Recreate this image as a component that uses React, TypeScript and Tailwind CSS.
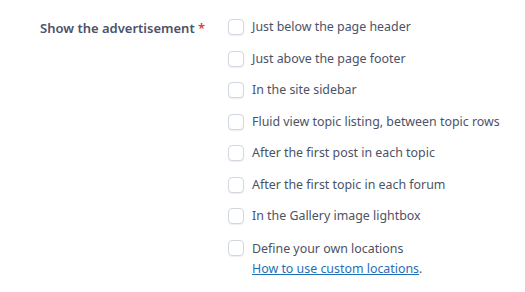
import React from "react";

const options = [
  "Just below the page header",
  "Just above the page footer",
  "In the site sidebar",
  "Fluid view topic listing, between topic rows",
  "After the first post in each topic",
  "After the first topic in each forum",
  "In the Gallery image lightbox",
];

function Box() {
  return (
    <span className="mt-[2px] h-4 w-4 shrink-0 rounded-[4px] border border-[#d3d7e2] bg-white shadow-[0_1px_1px_rgba(40,50,80,0.08)]" />
  );
}

export default function App() {
  return (
    <div
      className="h-[292px] w-[525px] bg-white text-[13px] leading-5 text-[#4c5266]"
      style={{ fontFamily: '"Noto Sans", "Open Sans", sans-serif' }}
    >
      <div className="flex pl-10 pt-[17px]">
        <div className="w-[188px] shrink-0 pt-[1px] font-semibold text-[#4a526c]">
          Show the advertisement <span className="text-[#d93a3a]">*</span>
        </div>
        <div className="flex flex-col gap-[11.5px] text-[12.4px]">
          {options.map((o) => (
            <label key={o} className="flex items-start gap-2">
              <Box />
              <span>{o}</span>
            </label>
          ))}
          <label className="flex items-start gap-2">
            <Box />
            <span className="flex flex-col pt-[1px]">
              <span>Define your own locations</span>
              <span>
                <a href="#" className="text-[#1f6fb8] underline">
                  How to use custom locations
                </a>
                .
              </span>
            </span>
          </label>
        </div>
      </div>
    </div>
  );
}
